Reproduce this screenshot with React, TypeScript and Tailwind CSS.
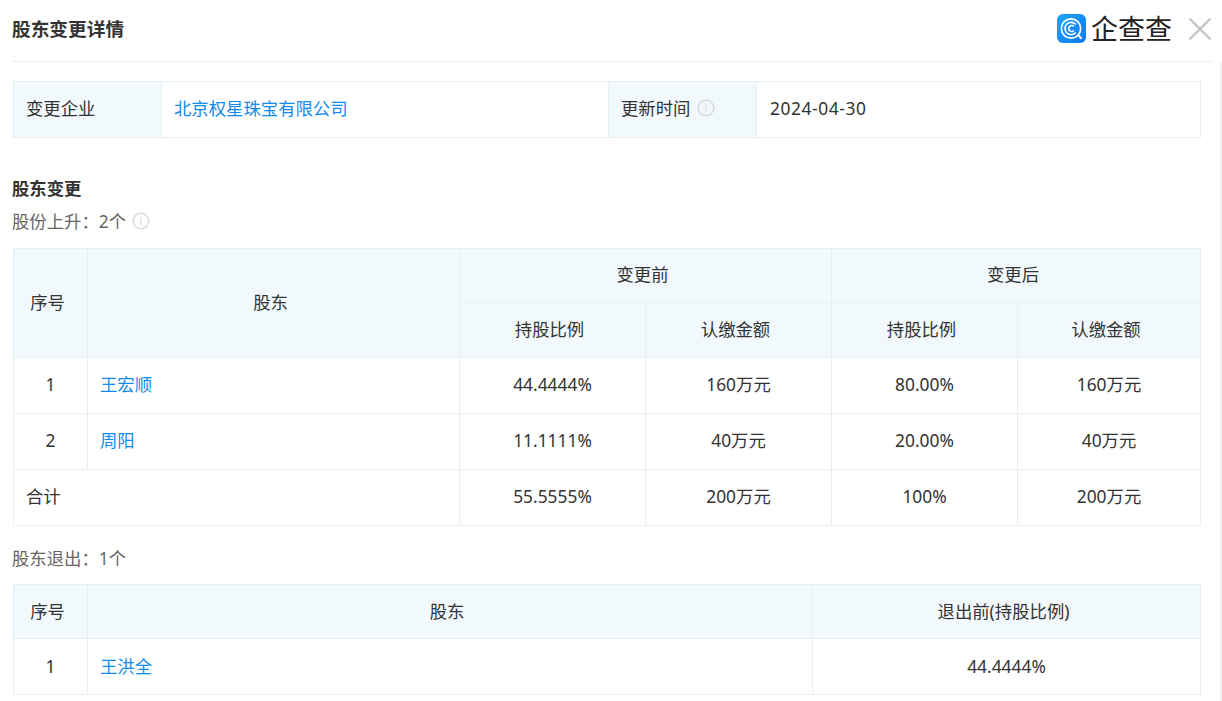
const FONT = "font-['Noto_Sans','Noto_Sans_CJK_SC',sans-serif]";

function Info({ className = "" }: { className?: string }) {
  return (
    <svg viewBox="0 0 18 18" className={`inline-block w-[18px] h-[18px] ${className}`} fill="none">
      <circle cx="9" cy="9" r="7.8" stroke="#d3d6d9" strokeWidth="1.2" />
      <rect x="8.4" y="4.6" width="1.2" height="1.4" fill="#d3d6d9" />
      <rect x="8.4" y="7.2" width="1.2" height="6" fill="#d3d6d9" />
    </svg>
  );
}

const cell = "border border-[#e6eff5] font-normal p-0";
const th = `${cell} bg-[#f2f9fc] text-center pr-[6px] pb-[3px]`;
const thLow = `${cell} bg-[#f2f9fc] text-center pr-[6px] pb-[1px]`;
const thLabel = `${cell} bg-[#f2f9fc] text-left pl-[12px] pb-[4px]`;
const td = `${cell} text-center pb-[4px]`;
const tdLow = `${cell} text-center pb-[2px]`;
const tdLeft = `${cell} text-left pl-[12px] pb-[4px]`;
const tdLeftLow = `${cell} text-left pl-[12px] pb-[2px]`;
const link = "text-[#128bed]";

function Up() {
  const rows = [
    ["1", "王宏顺", "44.4444%", "160万元", "80.00%", "160万元"],
    ["2", "周阳", "11.1111%", "40万元", "20.00%", "40万元"],
  ];
  return (
    <table className="w-[1187px] table-fixed border-collapse">
      <colgroup>
        <col className="w-[74px]" />
        <col className="w-[372px]" />
        <col className="w-[186px]" />
        <col className="w-[186px]" />
        <col className="w-[186px]" />
        <col className="w-[183px]" />
      </colgroup>
      <thead>
        <tr className="h-[54px]">
          <th rowSpan={2} className={th}>序号</th>
          <th rowSpan={2} className={th}>股东</th>
          <th colSpan={2} className={th}>变更前</th>
          <th colSpan={2} className={th}>变更后</th>
        </tr>
        <tr className="h-[55px]">
          <th className={th}>持股比例</th>
          <th className={th}>认缴金额</th>
          <th className={th}>持股比例</th>
          <th className={th}>认缴金额</th>
        </tr>
      </thead>
      <tbody>
        {rows.map((r) => (
          <tr key={r[0]} className="h-[56px]">
            <td className={td}>{r[0]}</td>
            <td className={`${tdLeft} ${link}`}>{r[1]}</td>
            <td className={td}>{r[2]}</td>
            <td className={td}>{r[3]}</td>
            <td className={td}>{r[4]}</td>
            <td className={td}>{r[5]}</td>
          </tr>
        ))}
        <tr className="h-[56px]">
          <td colSpan={2} className={tdLeft}>合计</td>
          <td className={td}>55.5555%</td>
          <td className={td}>200万元</td>
          <td className={td}>100%</td>
          <td className={td}>200万元</td>
        </tr>
      </tbody>
    </table>
  );
}

function Exit() {
  return (
    <table className="w-[1187px] table-fixed border-collapse">
      <colgroup>
        <col className="w-[74px]" />
        <col className="w-[725px]" />
        <col className="w-[388px]" />
      </colgroup>
      <thead>
        <tr className="h-[54px]">
          <th className={thLow}>序号</th>
          <th className={thLow}>股东</th>
          <th className={thLow}>退出前(持股比例)</th>
        </tr>
      </thead>
      <tbody>
        <tr className="h-[56px]">
          <td className={tdLow}>1</td>
          <td className={`${tdLeftLow} ${link}`}>王洪全</td>
          <td className={tdLow}>44.4444%</td>
        </tr>
      </tbody>
    </table>
  );
}

export default function App() {
  return (
    <div className={`relative w-[1222px] h-[701px] overflow-hidden bg-white text-[#333333] text-[17.36px] leading-[24px] ${FONT}`}>
      <header className="mx-[12px] w-[1201px] h-[62px] border-b border-[#eeeeee] flex items-center justify-between pb-[4px]">
        <h1 className="text-[18.7px] font-bold text-[#333333]">股东变更详情</h1>
        <div className="flex items-center">
          <svg viewBox="0 0 30 30" className="w-[29px] h-[29px]">
            <defs>
              <linearGradient id="lg" x1="0" y1="0" x2="1" y2="1">
                <stop offset="0" stopColor="#22a5fb" />
                <stop offset="1" stopColor="#0a78f5" />
              </linearGradient>
            </defs>
            <rect width="30" height="30" rx="6" fill="url(#lg)" />
            <circle cx="14.5" cy="15" r="10" fill="none" stroke="#fff" strokeWidth="1.7" />
            <path d="M19.5 10.8A6.4 6.4 0 1 0 19.5 19.2" fill="none" stroke="#fff" strokeWidth="1.7" />
            <path d="M17.4 13A3 3 0 1 0 17.4 17" fill="none" stroke="#fff" strokeWidth="1.6" />
            <path d="M21.5 21.5L25.5 25.5" stroke="#fff" strokeWidth="2.2" />
          </svg>
          <span className="ml-[5px] text-[27px] leading-[30px] text-[#222222] w-[81px] whitespace-nowrap">企查查</span>
          <svg viewBox="0 0 24 24" className="ml-[16px] mr-[1px] w-[24px] h-[24px]" fill="none" stroke="#c4c4c4" strokeWidth="2.4">
            <path d="M1.5 1.5L22.5 22.5M22.5 1.5L1.5 22.5" />
          </svg>
        </div>
      </header>

      <main className="pl-[13px]">
        <table className="mt-[19px] w-[1187px] table-fixed border-collapse">
          <colgroup>
            <col className="w-[148px]" />
            <col className="w-[447px]" />
            <col className="w-[148px]" />
            <col className="w-[444px]" />
          </colgroup>
          <tbody>
            <tr className="h-[56px]">
              <td className={thLabel}>变更企业</td>
              <td className={`${tdLeft} ${link}`}>北京权星珠宝有限公司</td>
              <td className={thLabel}>
                <span className="inline-flex items-center gap-[7px]">更新时间<Info /></span>
              </td>
              <td className={`${cell} text-left pl-[13px] pb-[4px] tracking-[0.6px]`}>2024-04-30</td>
            </tr>
          </tbody>
        </table>

        <h2 className="-ml-px mt-[38px] font-bold leading-[24px]">股东变更</h2>
        <p className="-ml-px mt-[9px] mb-[15px] text-[#666666] flex items-center gap-[6px] h-[24px]">
          股份上升：2个<Info />
        </p>
        <Up />
        <p className="-ml-px mt-[20px] mb-[14px] text-[#666666] h-[24px]">股东退出：1个</p>
        <Exit />
      </main>
      <div className="absolute right-0 top-[62px] bottom-0 w-[2px] bg-[#f3f3f3]" />
    </div>
  );
}
